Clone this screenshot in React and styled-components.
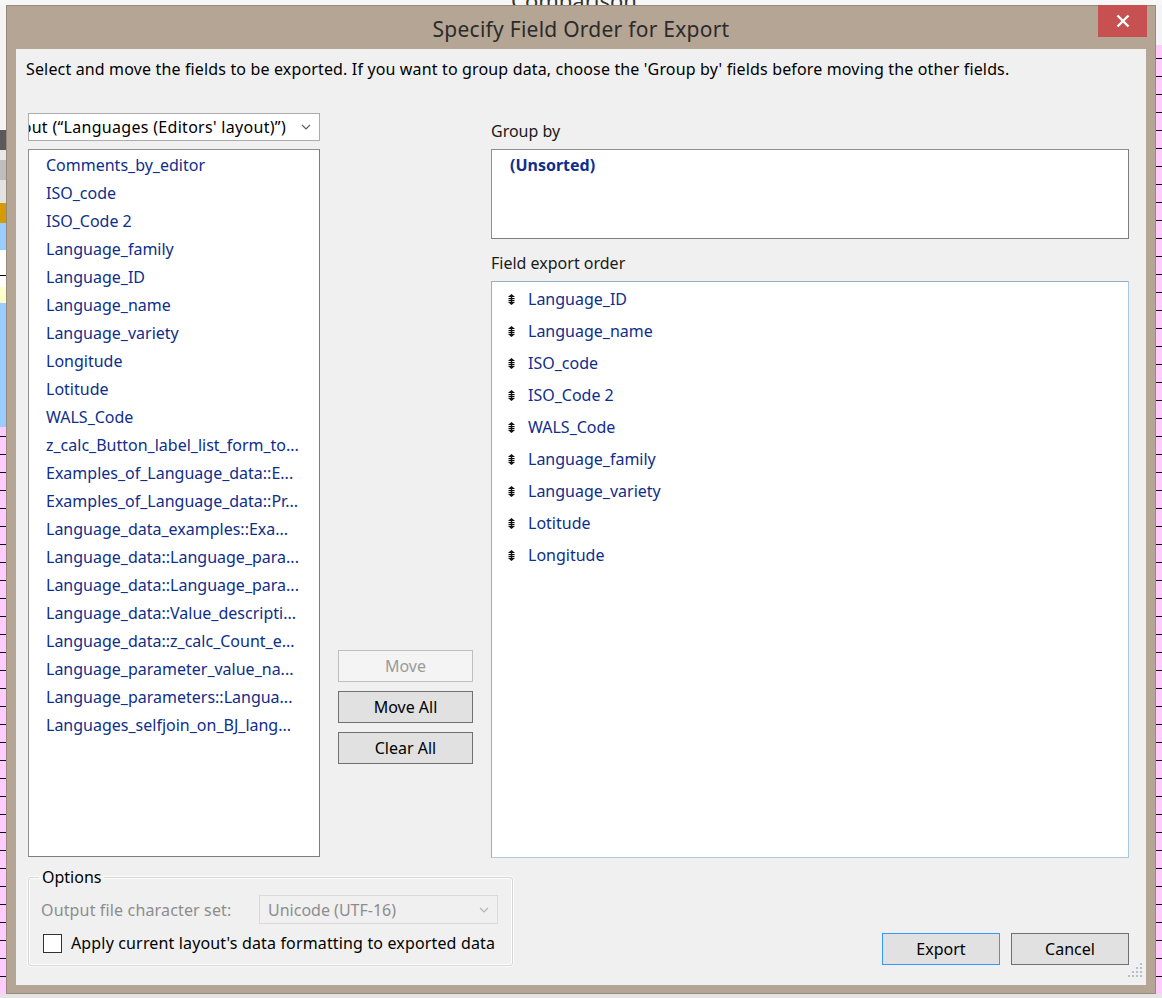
import React from 'react';
import styled, { createGlobalStyle } from 'styled-components';

const ui = `"Noto Sans", "Open Sans", "DejaVu Sans", sans-serif`;

const GlobalStyle = createGlobalStyle`
  html, body { margin: 0; padding: 0; }
  body {
    width: 1162px;
    height: 998px;
    overflow: hidden;
    background: #e6e6e6;
    font-family: ${ui};
  }
  * { box-sizing: border-box; }
`;

const Desktop = styled.div`
  width: 1162px;
  height: 998px;
  display: flex;
  flex-direction: column;
  overflow: hidden;
`;

const TopStrip = styled.div`
  height: 5px;
  flex: none;
  background: #f7f7f7;
  overflow: hidden;
  font-size: 22px;
  line-height: 22px;
  color: #333;
`;

const BehindTitle = styled.div`
  margin: -11px 0 0 511px;
`;

const Row = styled.div`
  display: flex;
  flex: none;
  height: 989px;
`;

const LeftStrip = styled.div`
  width: 6px;
  flex: none;
  background:
    linear-gradient(to bottom,
      #f4f4f4 0 125px, #5a5a5a 125px 145px, #e8e8e8 145px 155px,
      #bdbdbd 155px 175px, #e2e2e2 175px 198px, #d49a00 198px 218px,
      #99ccff 218px 245px, #ffffff 245px 270px, #000 270px 271px,
      #ffffff 271px 282px, #ffffcc 282px 298px, #99ccff 298px 422px,
      transparent 422px),
    repeating-linear-gradient(to bottom, #ffccff 0 17px, #111 17px 18px);
`;

const RightStrip = styled.div`
  width: 6px;
  flex: none;
  background:
    linear-gradient(to bottom, #f4f4f4 0 40px, transparent 40px),
    repeating-linear-gradient(to bottom, #ffccff 0 17px, #111 17px 18px);
`;

const BottomStrip = styled.div`
  flex: 1;
  background: #e4e4e4;
`;

const Window = styled.div`
  width: 1150px;
  height: 989px;
  flex: none;
  background: #b4a594;
  border: 1px solid #968a7d;
  display: flex;
  flex-direction: column;
`;

const TitleBar = styled.div`
  height: 43px;
  flex: none;
  display: grid;
  grid-template-columns: 1fr auto 1fr;
`;

const Title = styled.div`
  grid-column: 2;
  align-self: center;
  font-size: 21px;
  letter-spacing: 0.25px;
  color: #2b2b2b;
  padding-top: 3px;
`;

const Close = styled.div`
  grid-column: 3;
  justify-self: end;
  width: 49px;
  height: 32px;
  margin: -1px 8px 0 0;
  background: #c75050;
  display: flex;
  align-items: center;
  justify-content: center;
`;

const Client = styled.div`
  flex: 1;
  margin: 0 9px 8px 9px;
  background: #f0f0f0;
  padding: 8px 17px 0 12px;
  display: flex;
  flex-direction: column;
  position: relative;
`;

const Intro = styled.div`
  font-size: 16px;
  line-height: 24px;
  letter-spacing: 0.15px;
  margin-left: -2px;
  color: #000;
  white-space: nowrap;
`;

const Main = styled.div`
  display: flex;
  margin-top: 32px;
  height: 745px;
`;

const LeftCol = styled.div`
  width: 292px;
  flex: none;
  display: flex;
  flex-direction: column;
`;

const Select = styled.div`
  height: 28px;
  flex: none;
  background: ${p => (p.$disabled ? '#f0f0f0' : '#fff')};
  border: 1px solid ${p => (p.$disabled ? '#d9d9d9' : '#acacac')};
  display: flex;
  align-items: center;
  overflow: hidden;
  font-size: 16px;
  color: ${p => (p.$disabled ? '#8d8d8d' : '#000')};
`;

const SelectText = styled.div`
  flex: 1;
  min-width: 0;
  display: flex;
  justify-content: ${p => (p.$clipStart ? 'flex-end' : 'flex-start')};
  overflow: hidden;
  white-space: nowrap;
  letter-spacing: ${p => (p.$clipStart ? '0.3px' : '0')};
  padding-left: ${p => (p.$clipStart ? '0' : '8px')};
  padding-right: ${p => (p.$clipStart ? '7px' : '0')};
`;

const Chevron = styled.div`
  width: 26px;
  flex: none;
  display: flex;
  justify-content: center;
`;

const ListBox = styled.div`
  margin-top: ${p => p.$mt ?? 8}px;
  height: ${p => p.$h}px;
  background: #fff;
  border: 1px solid #8f8f94;
  border-right-color: #7d7d7d;
  border-bottom-color: #7d7d7d;
  padding-top: ${p => p.$pt || 1}px;
  overflow: hidden;
  ${p => p.$focus && `border-color: #a7cbe6; border-left-color: #8fb0cc; border-top-color: #8fb0cc;`}
`;

const Item = styled.div`
  height: ${p => p.$h || 28}px;
  line-height: ${p => p.$h || 28}px;
  padding-left: ${p => p.$pl || 17}px;
  font-size: 16px;
  color: #0f2e8a;
  white-space: nowrap;
  overflow: hidden;
  display: flex;
  align-items: center;
  font-weight: ${p => (p.$bold ? 700 : 400)};
`;

const Grip = styled.svg`
  width: 7px;
  height: 11px;
  flex: none;
  margin-right: 13px;
`;

const MidCol = styled.div`
  width: 135px;
  flex: none;
  margin-left: 18px;
  padding-top: 537px;
  display: flex;
  flex-direction: column;
  gap: 9px;
`;

const Button = styled.div`
  height: 32px;
  width: ${p => (p.$w ? `${p.$w}px` : '100%')};
  display: flex;
  align-items: center;
  justify-content: center;
  font-size: 16px;
  padding-bottom: 1px;
  color: ${p => (p.$disabled ? '#9a9a9a' : '#000')};
  background: ${p => (p.$disabled ? '#f4f4f4' : '#e1e1e1')};
  border: 1px solid ${p => (p.$disabled ? '#bfbfbf' : p.$primary ? '#3399ff' : '#707070')};
`;

const RightCol = styled.div`
  flex: 1;
  margin-left: 18px;
  display: flex;
  flex-direction: column;
`;

const Label = styled.div`
  height: ${p => p.$h}px;
  padding-top: ${p => p.$pt || 0}px;
  line-height: 36px;
  font-size: 16px;
  color: #1a1a1a;
`;

const Bottom = styled.div`
  display: flex;
  align-items: flex-end;
  justify-content: space-between;
  margin-top: 8px;
`;

const Group = styled.fieldset`
  width: 485px;
  margin: 0 0 -1px 0;
  padding: 7px 14px 11px 12px;
  border: 1px solid #d6d6d6;
  border-radius: 3px;
  box-shadow: inset 0 0 0 1px #fff, 0 0 0 1px #fafafa;
  display: flex;
  flex-direction: column;
  gap: 8px;
`;

const Legend = styled.legend`
  padding: 0 3px;
  margin-left: -2px;
  font-size: 16px;
  line-height: 22px;
  color: #000;
`;

const OptionRow = styled.div`
  display: flex;
  align-items: center;
  font-size: 16px;
  letter-spacing: 0.15px;
  color: ${p => (p.$muted ? '#8d8d8d' : '#000')};
`;

const Check = styled.div`
  width: 19px;
  height: 19px;
  border: 1px solid #333;
  background: #fff;
  margin: 0 9px 0 2px;
`;

const Actions = styled.div`
  display: flex;
  gap: 11px;
`;

const ResizeGrip = styled.svg`
  position: absolute;
  right: 3px;
  bottom: 7px;
  width: 16px;
  height: 16px;
`;

const available = [
  'Comments_by_editor',
  'ISO_code',
  'ISO_Code 2',
  'Language_family',
  'Language_ID',
  'Language_name',
  'Language_variety',
  'Longitude',
  'Lotitude',
  'WALS_Code',
  'z_calc_Button_label_list_form_to...',
  'Examples_of_Language_data::E...',
  'Examples_of_Language_data::Pr...',
  'Language_data_examples::Exa...',
  'Language_data::Language_para...',
  'Language_data::Language_para...',
  'Language_data::Value_descripti...',
  'Language_data::z_calc_Count_e...',
  'Language_parameter_value_na...',
  'Language_parameters::Langua...',
  'Languages_selfjoin_on_BJ_lang...',
];

const exportOrder = [
  'Language_ID',
  'Language_name',
  'ISO_code',
  'ISO_Code 2',
  'WALS_Code',
  'Language_family',
  'Language_variety',
  'Lotitude',
  'Longitude',
];

const ChevronIcon = ({ color }) => (
  <svg width="10" height="6" viewBox="0 0 10 6">
    <path d="M1 1l4 4 4-4" fill="none" stroke={color} strokeWidth="1.2" />
  </svg>
);

const MoveIcon = () => (
  <Grip viewBox="0 0 7 11">
    <path d="M3.5 0L7 3H0z M0 8h7l-3.5 3z" fill="#111" />
    <rect x="2.8" y="2" width="1.4" height="7" fill="#111" />
    <rect x="0.5" y="4" width="6" height="1.2" fill="#111" />
    <rect x="0.5" y="6" width="6" height="1.2" fill="#111" />
  </Grip>
);

const App = () => {
  const dots = [];
  for (let r = 0; r < 4; r++) {
    for (let c = 3 - r; c < 4; c++) {
      dots.push(<rect key={`${r}-${c}`} x={c * 4 + 1} y={r * 4 + 1} width="2" height="2" fill="#b9bccb" />);
    }
  }

  return (
    <>
      <GlobalStyle />
      <Desktop>
        <TopStrip>
          <BehindTitle>Comparison</BehindTitle>
        </TopStrip>
        <Row>
          <LeftStrip />
          <Window>
            <TitleBar>
              <Title>Specify Field Order for Export</Title>
              <Close>
                <svg width="14" height="14" viewBox="0 0 14 14">
                  <path d="M1.5 1.5l11 11M12.5 1.5l-11 11" stroke="#fff" strokeWidth="2.4" />
                </svg>
              </Close>
            </TitleBar>
            <Client>
              <Intro>
                Select and move the fields to be exported. If you want to group data, choose the 'Group by' fields before moving the other fields.
              </Intro>
              <Main>
                <LeftCol>
                  <Select>
                    <SelectText $clipStart>Current Layout (“Languages (Editors' layout)”)</SelectText>
                    <Chevron><ChevronIcon color="#606060" /></Chevron>
                  </Select>
                  <ListBox $h={708}>
                    {available.map((f, i) => (
                      <Item key={i}>{f}</Item>
                    ))}
                  </ListBox>
                </LeftCol>
                <MidCol>
                  <Button $disabled>Move</Button>
                  <Button>Move All</Button>
                  <Button>Clear All</Button>
                </MidCol>
                <RightCol>
                  <Label $h={36}>Group by</Label>
                  <ListBox $h={90} $mt={0} $pt={1}>
                    <Item $bold $pl={18}>(Unsorted)</Item>
                  </ListBox>
                  <Label $h={42} $pt={6}>Field export order</Label>
                  <ListBox $h={577} $mt={0} $focus>
                    {exportOrder.map(f => (
                      <Item key={f} $h={32} $pl={16}>
                        <MoveIcon />
                        {f}
                      </Item>
                    ))}
                  </ListBox>
                </RightCol>
              </Main>
              <Bottom>
                <Group>
                  <Legend>Options</Legend>
                  <OptionRow $muted>
                    <span>Output file character set:</span>
                    <Select $disabled style={{ width: 239, height: 29, marginLeft: 'auto' }}>
                      <SelectText>Unicode (UTF-16)</SelectText>
                      <Chevron><ChevronIcon color="#b5b5b5" /></Chevron>
                    </Select>
                  </OptionRow>
                  <OptionRow>
                    <Check />
                    Apply current layout's data formatting to exported data
                  </OptionRow>
                </Group>
                <Actions>
                  <Button $w={118} $primary>Export</Button>
                  <Button $w={118}>Cancel</Button>
                </Actions>
              </Bottom>
              <ResizeGrip viewBox="0 0 16 16">{dots}</ResizeGrip>
            </Client>
          </Window>
          <RightStrip />
        </Row>
        <BottomStrip />
      </Desktop>
    </>
  );
};

export default App;
